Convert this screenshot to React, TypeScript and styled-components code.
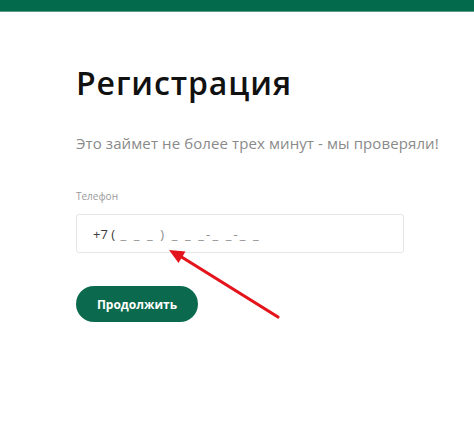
import React from "react";
import styled, { createGlobalStyle } from "styled-components";

const Global = createGlobalStyle`
  html, body { margin: 0; padding: 0; background: #ffffff; }
  body { font-family: "Open Sans", "Liberation Sans", sans-serif; }
  * { box-sizing: border-box; }
`;

const Page = styled.div`
  position: relative;
  width: 474px;
  height: 421px;
  overflow: hidden;
  background: #fff;
`;

const TopBar = styled.div`
  height: 12px;
  background: #046a4c;
  border-bottom: 1px solid #5e9b87;
`;

const Content = styled.main`
  display: flex;
  flex-direction: column;
  padding: 51px 0 0 76px;
`;

const Title = styled.h1`
  margin: 0;
  font-size: 32px;
  line-height: 40px;
  font-weight: 600;
  color: #111;
  letter-spacing: 0.9px;
`;

const Subtitle = styled.p`
  margin: 30px 0 0;
  font-size: 15px;
  line-height: 20px;
  color: #8a8a8a;
  letter-spacing: 0.1px;
`;

const Label = styled.label`
  margin-top: 36px;
  font-size: 10px;
  line-height: 14px;
  color: #9a9a9a;
`;

const InputBox = styled.div`
  margin-top: 11px;
  width: 328px;
  height: 39px;
  border: 1px solid #e6e6e6;
  border-radius: 3px;
  display: flex;
  align-items: center;
  padding-left: 16px;
  font-size: 13px;
  color: #3a3a3a;
  white-space: pre;
`;

const Mask = styled.span`
  color: #8c8c8c;
  letter-spacing: 2.1px;
`;

const Button = styled.button`
  margin-top: 33px;
  width: 122px;
  height: 36px;
  border: none;
  border-radius: 18px;
  background: #0b6a4d;
  color: #fff;
  font-family: "Open Sans", "Liberation Sans", sans-serif;
  font-size: 12px;
  font-weight: 700;
  cursor: pointer;
`;

const ArrowLayer = styled.svg`
  position: absolute;
  left: 0;
  top: 0;
  width: 474px;
  height: 421px;
  pointer-events: none;
`;

export default function App() {
  return (
    <>
      <Global />
      <Page>
        <TopBar />
        <Content>
          <Title>Регистрация</Title>
          <Subtitle>Это займет не более трех минут - мы проверяли!</Subtitle>
          <Label>Телефон</Label>
          <InputBox>
            +7 (<Mask> _ _ _ ) _ _ _-_ _-_ _</Mask>
          </InputBox>
          <Button>Продолжить</Button>
        </Content>
        <ArrowLayer viewBox="0 0 474 421">
          <line x1="278" y1="317" x2="180" y2="256" stroke="#e3141b" strokeWidth="3.2" strokeLinecap="round" />
          <polygon points="169,250 185.5,251.5 178.5,263" fill="#e3141b" />
        </ArrowLayer>
      </Page>
    </>
  );
}
